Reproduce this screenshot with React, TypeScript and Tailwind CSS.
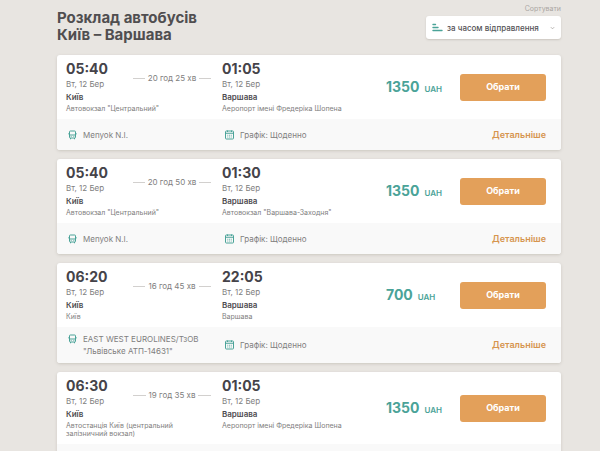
import React, { useState } from 'react';

interface Stop {
  time: string;
  date: string;
  city: string;
  station: string;
}

interface Trip {
  id: number;
  from: Stop;
  to: Stop;
  duration: string;
  price: number;
  carrier: string;
}

const DATE = 'Вт, 12 Бер';

const TRIPS: Trip[] = [
  {
    id: 1,
    from: { time: '05:40', date: DATE, city: 'Київ', station: 'Автовокзал "Центральний"' },
    to: { time: '01:05', date: DATE, city: 'Варшава', station: 'Аеропорт імені Фредеріка Шопена' },
    duration: '20 год 25 хв',
    price: 1350,
    carrier: 'Menyok N.I.',
  },
  {
    id: 2,
    from: { time: '05:40', date: DATE, city: 'Київ', station: 'Автовокзал "Центральний"' },
    to: { time: '01:30', date: DATE, city: 'Варшава', station: 'Автовокзал "Варшава-Заходня"' },
    duration: '20 год 50 хв',
    price: 1350,
    carrier: 'Menyok N.I.',
  },
  {
    id: 3,
    from: { time: '06:20', date: DATE, city: 'Київ', station: 'Київ' },
    to: { time: '22:05', date: DATE, city: 'Варшава', station: 'Варшава' },
    duration: '16 год 45 хв',
    price: 700,
    carrier: 'EAST WEST EUROLINES/ТзОВ "Львівське АТП-14631"',
  },
  {
    id: 4,
    from: { time: '06:30', date: DATE, city: 'Київ', station: 'Автостанція Київ (центральний залізничний вокзал)' },
    to: { time: '01:05', date: DATE, city: 'Варшава', station: 'Аеропорт імені Фредеріка Шопена' },
    duration: '19 год 35 хв',
    price: 1350,
    carrier: 'Menyok N.I.',
  },
];

const BusIcon = () => (
  <svg viewBox="0 0 18 18" className="w-[9px] h-[12px] shrink-0 text-[#4aa398]" fill="none" stroke="currentColor" strokeWidth="2">
    <rect x="3" y="1" width="12" height="14" rx="1.5" />
    <path d="M3 9h12" />
    <path d="M1 5v3M17 5v3" strokeWidth="1" />
    <path d="M5 15v2.5M13 15v2.5M5.5 12h1.5M11 12h1.5" />
  </svg>
);

const CalendarIcon = () => (
  <svg viewBox="0 0 18 18" className="w-[9px] h-[12px] shrink-0 text-[#4aa398]" fill="none" stroke="currentColor" strokeWidth="2">
    <rect x="1" y="1" width="16" height="16" rx="1.5" />
    <path d="M1 5.5h16" />
    <path d="M5 0v3M13 0v3" />
    <path d="M4.5 9.5h2M8 9.5h2M11.5 9.5h2M4.5 13h2M8 13h2M11.5 13h2" strokeWidth="1.5" />
  </svg>
);

const SortIcon = () => (
  <svg viewBox="0 0 11 9" className="w-[11px] h-[9px]" stroke="#4aa398" strokeWidth="1.4" strokeLinecap="round">
    <path d="M1 1.5h2.5M1 4.5h5M1 7.5h9" />
  </svg>
);

const StopTime: React.FC<{ stop: Stop }> = ({ stop }) => (
  <div>
    <p className="text-[14px] leading-[18px] font-bold text-[#454349]">{stop.time}</p>
    <p className="text-[8px] leading-[12px] text-[#807e7e]">{stop.date}</p>
  </div>
);

const StopPlace: React.FC<{ stop: Stop }> = ({ stop }) => (
  <div className="pr-[26px]">
    <p className="text-[8px] leading-[11px] font-semibold text-[#4d4b50]">{stop.city}</p>
    <p className="mt-[2px] text-[7px] leading-[8px] text-[#807e7e]">{stop.station}</p>
  </div>
);

const TripCard: React.FC<{ trip: Trip }> = ({ trip }) => (
  <article className="rounded-[3px] bg-white shadow-[0_1px_3px_rgba(120,110,95,0.25)] overflow-hidden">
    <div className="flex items-center pl-[9px] pr-[15px]">
      <div className="flex-1 pt-[5px] pb-[6px]">
        <div className="grid grid-cols-[67px_78px_1fr] items-start">
          <StopTime stop={trip.from} />
          <div className="flex items-center gap-[3px] pt-[12px] text-[8px] leading-[12px] text-[#807e7e] whitespace-nowrap">
            <span className="h-px flex-1 bg-[#d2d0ce]" />
            {trip.duration}
            <span className="h-px flex-1 bg-[#d2d0ce]" />
          </div>
          <div className="pl-[11px]">
            <StopTime stop={trip.to} />
          </div>
        </div>
        <div className="mt-[2px] grid grid-cols-[156px_1fr] items-start">
          <StopPlace stop={trip.from} />
          <StopPlace stop={trip.to} />
        </div>
      </div>
      <p className="w-[74px] pt-[2px] flex items-baseline gap-[5px] text-[14px] leading-[18px] font-bold text-[#4aa398]">
        {trip.price}
        <span className="text-[8px] font-semibold">UAH</span>
      </p>
      <button className="w-[86px] h-[27px] rounded-[3px] bg-[#e3a05a] text-[9px] font-bold text-white">
        Обрати
      </button>
    </div>

    <div className="flex items-center min-h-[31px] pl-[11px] pr-[15px] py-[6px] bg-[#f9f9f9] text-[8px] leading-[12px] text-[#807e7e]">
      <div className="w-[157px] pr-[24px] flex items-start gap-[6px]">
        <BusIcon />
        <span>{trip.carrier}</span>
      </div>
      <div className="flex-1 flex items-center gap-[6px]">
        <CalendarIcon />
        Графік: Щоденно
      </div>
      <a href="#details" className="text-[9px] font-semibold text-[#d6954f]">Детальніше</a>
    </div>
  </article>
);

const App: React.FC = () => {
  const [sort, setSort] = useState('departure');

  return (
    <main className="min-h-screen bg-[#e8e5e1] pl-[57px] pr-[39px] pb-4 font-['Inter','Noto_Sans',sans-serif]">
      <header className="flex items-start justify-between pt-[4px] pb-[12px]">
        <h1 className="pt-[5px] text-[15px] leading-[17px] font-bold text-[#504e50]">
          Розклад автобусів
          <br />
          Київ – Варшава
        </h1>
        <div className="w-[135px]">
          <label htmlFor="sort" className="block pb-[2px] text-right text-[7px] leading-[10px] text-[#aaa6a2]">
            Сортувати
          </label>
          <div className="relative">
            <select
              id="sort"
              value={sort}
              onChange={(e) => setSort(e.target.value)}
              className="block w-full h-[23px] appearance-none rounded-[3px] bg-white pl-[21px] pr-[12px] text-[8px] font-medium text-[#545256] shadow-[0_1px_2px_rgba(120,110,95,0.25)]"
            >
              <option value="departure">за часом відправлення</option>
              <option value="price">за ціною</option>
            </select>
            <span className="absolute left-[6px] top-[7px] pointer-events-none">
              <SortIcon />
            </span>
            <svg viewBox="0 0 6 4" className="absolute right-[6px] top-[10px] w-[5px] h-[4px] pointer-events-none" fill="none" stroke="#aaa6a2">
              <path d="M1 1l2 2 2-2" />
            </svg>
          </div>
        </div>
      </header>

      <section className="flex flex-col gap-[9px]">
        {TRIPS.map((trip) => (
          <TripCard key={trip.id} trip={trip} />
        ))}
      </section>
    </main>
  );
};

export default App;
